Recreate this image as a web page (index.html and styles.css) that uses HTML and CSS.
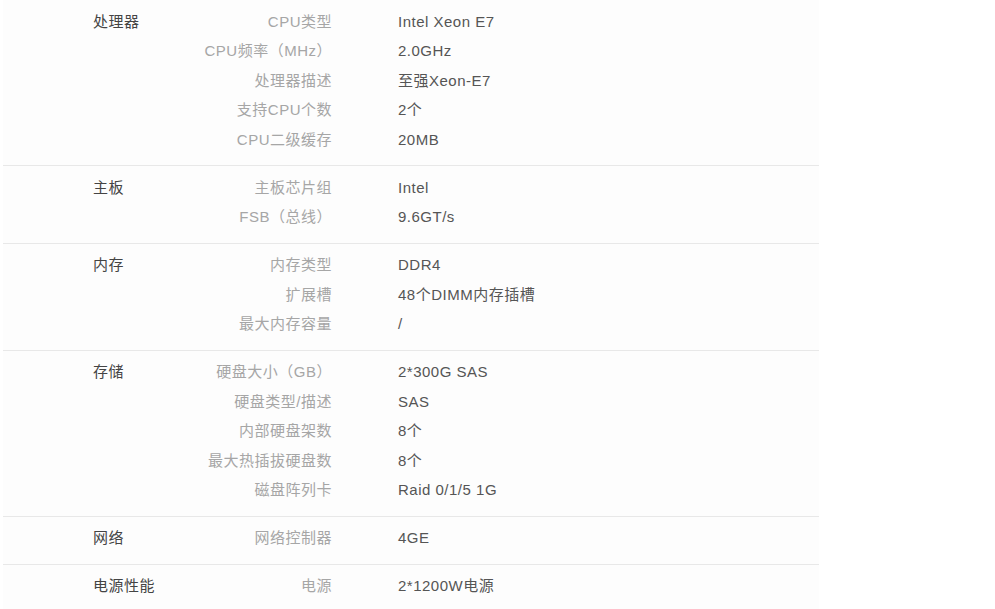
FILE: index.html
```html
<!DOCTYPE html>
<html lang="zh-CN">
<head>
<meta charset="utf-8">
<title>参数</title>
<link rel="stylesheet" href="styles.css">
</head>
<body>
<div class="specs">
  <div class="group">
    <div class="name">处理器</div>
    <div class="rows">
      <div class="row"><div class="label">CPU类型</div><div class="value">Intel Xeon E7</div></div>
      <div class="row"><div class="label">CPU频率（MHz）</div><div class="value">2.0GHz</div></div>
      <div class="row"><div class="label">处理器描述</div><div class="value">至强Xeon-E7</div></div>
      <div class="row"><div class="label">支持CPU个数</div><div class="value">2个</div></div>
      <div class="row"><div class="label">CPU二级缓存</div><div class="value">20MB</div></div>
    </div>
  </div>
  <div class="group">
    <div class="name">主板</div>
    <div class="rows">
      <div class="row"><div class="label">主板芯片组</div><div class="value">Intel</div></div>
      <div class="row"><div class="label">FSB（总线）</div><div class="value">9.6GT/s</div></div>
    </div>
  </div>
  <div class="group">
    <div class="name">内存</div>
    <div class="rows">
      <div class="row"><div class="label">内存类型</div><div class="value">DDR4</div></div>
      <div class="row"><div class="label">扩展槽</div><div class="value">48个DIMM内存插槽</div></div>
      <div class="row"><div class="label">最大内存容量</div><div class="value">/</div></div>
    </div>
  </div>
  <div class="group">
    <div class="name">存储</div>
    <div class="rows">
      <div class="row"><div class="label">硬盘大小（GB）</div><div class="value">2*300G SAS</div></div>
      <div class="row"><div class="label">硬盘类型/描述</div><div class="value">SAS</div></div>
      <div class="row"><div class="label">内部硬盘架数</div><div class="value">8个</div></div>
      <div class="row"><div class="label">最大热插拔硬盘数</div><div class="value">8个</div></div>
      <div class="row"><div class="label">磁盘阵列卡</div><div class="value">Raid 0/1/5 1G</div></div>
    </div>
  </div>
  <div class="group">
    <div class="name">网络</div>
    <div class="rows">
      <div class="row"><div class="label">网络控制器</div><div class="value">4GE</div></div>
    </div>
  </div>
  <div class="group">
    <div class="name">电源性能</div>
    <div class="rows">
      <div class="row"><div class="label">电源</div><div class="value">2*1200W电源</div></div>
    </div>
  </div>
</div>
</body>
</html>
```

FILE: styles.css
```css
html, body {
  margin: 0;
  padding: 0;
  background: #ffffff;
}
body {
  font-family: "Liberation Sans", Arial, "Noto Sans CJK SC", sans-serif;
  font-size: 15px;
  letter-spacing: 0.5px;
}
.specs {
  width: 816px;
  margin-left: 3px;
  background: #fdfdfd;
}
.group {
  display: flex;
  padding: 6.5px 0 11px 0;
  border-bottom: 1px solid #e8e8e8;
}
.name {
  width: 100px;
  padding-left: 90px;
  line-height: 29.5px;
  color: #444444;
}
.rows {
  display: flex;
  flex-direction: column;
}
.row {
  display: flex;
  line-height: 29.5px;
}
.label {
  width: 139px;
  text-align: right;
  color: #a6a6a6;
}
.value {
  margin-left: 66px;
  color: #555555;
}
```
